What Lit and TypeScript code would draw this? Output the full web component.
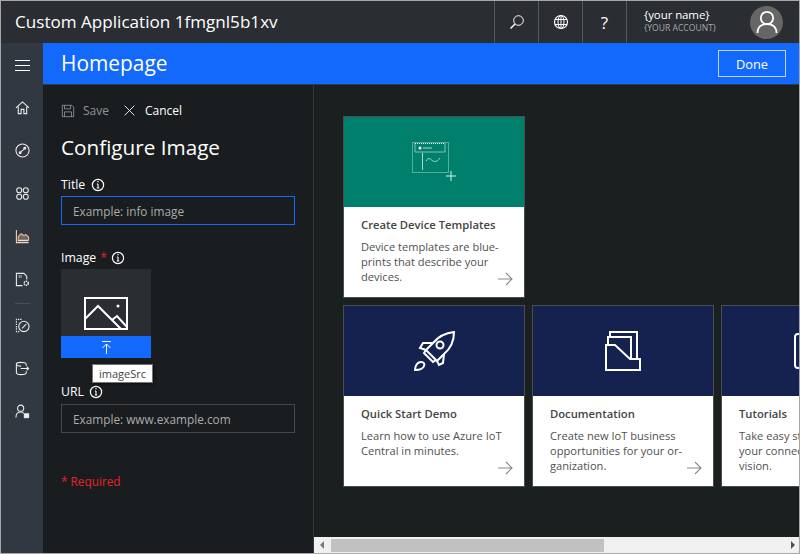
import { LitElement, html, css, svg } from 'lit';
import { customElement } from 'lit/decorators.js';

const icon = (body: unknown, size = 16, box = 16, sw = 1) => html`<svg width=${size} height=${size} viewBox="0 0 ${box} ${box}" fill="none" stroke="currentColor" stroke-width=${sw}>${body}</svg>`;

const info = html`<svg class="info" width="14" height="14" viewBox="0 0 14 14" fill="none" stroke="currentColor"><circle cx="7" cy="7" r="5.6" stroke-width="1.2"/><path d="M7 6v4M5.8 10h2.4M5.9 6H7" stroke-width="1.1"/><path d="M6.4 3.6h1.2" stroke-width="1.2"/></svg>`;

const arrow = html`<svg class="arrow" width="16" height="14" viewBox="0 0 16 14" fill="none" stroke="#8a8a8a" stroke-width="1.1"><path d="M1 7h14M9 1l6 6-6 6"/></svg>`;

const navIcons = [
  svg`<path d="M1 8.500 8 2l7 6.500M3.500 7v7.500h3V10h3v4.500h3V7"/>`,
  svg`<circle cx="8" cy="8" r="7"/><path d="M11 4.500c-2 .5-1 3-3 3.500s-1.500 2-3 3.500"/><circle cx="5.500" cy="10.500" r="1"/><circle cx="10.500" cy="5.500" r="1"/>`,
  svg`<circle cx="4.500" cy="4.500" r="2.700"/><circle cx="11.500" cy="4.500" r="2.700"/><circle cx="4.500" cy="11.500" r="2.700"/><circle cx="11.500" cy="11.500" r="2.700"/>`,
  svg`<path d="M1.500 1v13.500h13" stroke="#f3d3b5"/><path d="M3.500 12V8l3-3 3 2 2-1 3 2.500V12z" stroke="#f3b98b" fill="#6b6a6a"/><path d="M3 12.500h11"/>`,
  svg`<path d="M8 14.500H1.500v-13h8l3 3V8"/><path d="M4 4h4M4 5.500h4" stroke-dasharray="1 1"/><circle cx="12" cy="12" r="2.200" stroke-width="1.600" stroke-dasharray="1.500 .7"/>`,
];
const navIcons2 = [
  svg`<path d="M7 1.500H1.500v13H5" stroke-dasharray="1.500 1"/><circle cx="9.500" cy="9" r="5.500"/><path d="M7.500 11 12 6.500"/>`,
  svg`<path d="M12 5V3.500C12 2 9 1.500 6.500 1.500S1.500 2 1.500 3.500v9c0 1.500 2.500 2 5 2s5.500-.5 5.500-2V11M1.500 3.500c0 1.500 2.500 2 5 2"/><path d="M6 8h8.500M12.500 6l2 2-2 2"/>`,
  svg`<circle cx="6" cy="4.500" r="3.300"/><path d="M1 14.500c0-3.500 2-6 5-6 1.500 0 2.500.5 3.500 1.500"/><rect x="10" y="10.500" width="4.500" height="4" fill="currentColor"/>`,
];

const cards = [
  { title: 'Quick Start Demo', lines: ['Learn how to use Azure IoT', 'Central in minutes.'], art: 'rocket' },
  { title: 'Documentation', lines: ['Create new IoT business', 'opportunities for your or-', 'ganization.'], art: 'docs' },
  { title: 'Tutorials', lines: ['Take easy steps to get', 'your connected devices', 'vision.'], art: 'tablet' },
];

const arts: Record<string, unknown> = {
  rocket: html`<svg width="41" height="40" viewBox="0 0 41 40" fill="none" stroke="#fff" stroke-width="2"><path d="M40 1C30 2 24 6 19 12l-7 7 11 11 7-7c6-5 10-13 10-22z"/><circle cx="26" cy="14" r="3.500"/><path d="M19 12H9l-3 5 6 2M30 23l-1 9-4 2-2-4M12 19l-2 3 9 9 3-2"/><path d="M1 39c0-5 3-8 6-8s4 2 3 4c-1 3-5 4-9 4z"/></svg>`,
  docs: html`<svg width="36" height="40" viewBox="0 0 36 40" fill="none" stroke="#fff" stroke-width="2"><path d="M5 6V1h27v27"/><path d="M3 14V6h23v22"/><path d="M1 14h9l15 14h10v11H1z"/></svg>`,
  tablet: html`<svg width="36" height="36" viewBox="0 0 36 36" fill="none" stroke="#fff" stroke-width="2"><rect x="1" y="1" width="34" height="34" rx="3"/></svg>`,
};

@customElement('app-root')
export class AppRoot extends LitElement {
  static styles = css`
    :host {
      display: block;
      width: 800px;
      height: 554px;
      font-family: "Open Sans", "Noto Sans", sans-serif;
      color: #fff;
      overflow: hidden;
      box-sizing: border-box;
      border: 1px solid #a6a6a6;
      background: #1a1d1f;
    }
    .app { display: flex; flex-direction: column; height: 552px; }
    .head {
      height: 42px;
      flex: none;
      display: flex;
      background: #2a2d31;
    }
    .brand {
      flex: 1;
      padding-left: 14px;
      font-size: 17.1px;
      line-height: 42px;
      white-space: nowrap;
    }
    .tool {
      width: 44px;
      box-sizing: border-box;
      border-left: 1px solid #55585b;
      display: flex;
      align-items: center;
      justify-content: center;
      font-size: 17px;
    }
    .user {
      width: 173px;
      border-left: 1px solid #55585b;
      display: flex;
      align-items: center;
      justify-content: space-between;
      padding: 0 16px 0 17px;
      box-sizing: border-box;
    }
    .who { padding-bottom: 3px; }
    .user .name { font-size: 11.5px; line-height: 15px; letter-spacing: -.1px; }
    .user .acct { font-size: 8.6px; line-height: 11px; color: #a5aaad; margin-top: 1px; }
    .avatar {
      width: 33px;
      height: 33px;
      border-radius: 50%;
      background: #666;
      display: flex;
      align-items: center;
      justify-content: center;
    }
    .body { flex: 1; display: flex; min-height: 0; }
    .nav {
      width: 42px;
      flex: none;
      background: #323841;
      display: flex;
      flex-direction: column;
      align-items: center;
      padding-top: 17px;
      box-sizing: border-box;
      color: #ececec;
    }
    .nav .item { height: 43px; display: flex; align-items: flex-start; justify-content: center; flex: none; }
    .nav .item.burger { height: 40px; }
    .nav hr { width: 15px; border: 0; border-top: 1px solid #4a4f57; margin: -12px 0 14px; }
    .content { flex: 1; display: flex; flex-direction: column; min-width: 0; }
    .bar {
      height: 42px;
      flex: none;
      background: #1269fb;
      display: flex;
      align-items: center;
      justify-content: space-between;
      padding: 0 13px 0 18px;
      border-bottom: 1px solid #2f3b52;
      box-sizing: border-box;
      font-size: 20.9px;
    }
    .bar .page { margin-top: -2px; }
    .done {
      width: 68px;
      height: 27px;
      border: 1px solid #c2d4f0;
      box-sizing: border-box;
      font-size: 12.8px;
      display: flex;
      align-items: center;
      justify-content: center;
    }
    .split { flex: 1; display: flex; min-height: 0; }
    .panel {
      width: 270px;
      flex: none;
      padding: 16px 18px 0 18px;
      box-sizing: border-box;
      position: relative;
    }
    .actions { display: flex; align-items: center; font-size: 12px; height: 19px; }
    .actions .save { color: #8f9193; margin: 0 14px 0 8px; }
    .actions .cancel { margin-left: 9px; }
    .actions .x { color: #e6e6e6; display: flex; }
    .actions .disk { color: #8f9193; display: flex; }
    h1 { font-size: 20.7px; font-weight: 400; margin: 12px 0 0; line-height: 30px; }
    .label {
      display: flex;
      align-items: center;
      font-size: 12.3px;
      line-height: 16px;
      gap: 6px;
    }
    .label.first { margin-top: 15px; }
    .label.image { margin-top: 25px; gap: 5px; }
    .label.url { margin-top: 26px; gap: 5px; }
    .req { color: #e8202a; margin: 0 -1px; }
    .input {
      width: 234px;
      height: 29px;
      box-sizing: border-box;
      border: 1px solid #46484a;
      margin-top: 3px;
      padding-left: 11px;
      display: flex;
      align-items: center;
      font-size: 11.8px;
      color: #a9abad;
    }
    .input.focus { border-color: #1269fb; }
    .input.link { margin-top: 4px; }
    .pick { width: 90px; margin-top: 3px; }
    .thumb {
      height: 67px;
      background: #2a2d31;
      display: flex;
      align-items: flex-end;
      justify-content: center;
      padding-bottom: 5px;
      box-sizing: border-box;
    }
    .upload {
      height: 22px;
      background: #1269fb;
      display: flex;
      align-items: center;
      justify-content: center;
    }
    .tip {
      position: absolute;
      left: 49px;
      top: 279px;
      width: 61px;
      height: 19px;
      box-sizing: border-box;
      background: #fff;
      color: #444;
      border: 1px solid #767676;
      font-size: 11px;
      line-height: 17px;
      text-align: center;
      box-shadow: 1px 1px 3px rgba(0, 0, 0, .6);
      z-index: 2;
    }
    .required { color: #e8202a; font-size: 11.8px; margin-top: 40px; line-height: 16px; }
    .main {
      flex: 1;
      min-width: 0;
      border-left: 1px solid #33383c;
      display: flex;
      flex-direction: column;
      background: #1a1f20;
    }
    .scroller {
      flex: 1;
      min-height: 0;
      overflow: hidden;
      padding: 31px 0 0 29px;
      box-sizing: border-box;
    }
    .row { display: flex; gap: 7px; margin-bottom: 7px; }
    .card {
      width: 182px;
      height: 182px;
      flex: none;
      border: 1px solid #4a4d50;
      box-sizing: border-box;
      background: #fff;
      display: flex;
      flex-direction: column;
      position: relative;
      color: #444;
    }
    .art {
      height: 90px;
      flex: none;
      display: flex;
      align-items: center;
      justify-content: center;
      background: #15224f;
    }
    .art.green { background: #00806c; }
    .text { padding: 10px 17px 0; }
    .title { font-size: 11.25px; font-weight: 600; line-height: 16px; color: #444; white-space: nowrap; }
    .desc { font-size: 11.1px; line-height: 15px; margin-top: 6px; color: #505050; white-space: nowrap; }
    .arrow { position: absolute; right: 11px; bottom: 11px; }
    .track {
      height: 16px;
      flex: none;
      background: #f0f0f0;
      display: flex;
      align-items: center;
      padding: 0 4px 0 6px;
      box-sizing: border-box;
    }
    .thumbbar { width: 273px; height: 13px; background: #c1c1c1; margin-left: 7px; }
    .tri { width: 0; height: 0; border-top: 4px solid transparent; border-bottom: 4px solid transparent; }
    .tri.l { border-right: 4px solid #7a7a7a; }
    .tri.r { border-left: 4px solid #505050; margin-left: auto; }
  `;

  render() {
    return html`
      <div class="app">
        <div class="head">
          <div class="brand">Custom Application 1fmgnl5b1xv</div>
          <div class="tool">${icon(svg`<circle cx="9.500" cy="6.500" r="4.800"/><path d="M6 10 1.500 14.500" stroke-width="1.400"/>`)}</div>
          <div class="tool">${icon(svg`<circle cx="8" cy="8" r="6.500" stroke-width="1.200"/><ellipse cx="8" cy="8" rx="3" ry="6.500"/><path d="M2 5.500h12M2 10.500h12M8 1.500v13"/>`)}</div>
          <div class="tool">?</div>
          <div class="user">
            <div class="who">
              <div class="name">{your name}</div>
              <div class="acct">{YOUR ACCOUNT}</div>
            </div>
            <div class="avatar">
              <svg width="22" height="24" viewBox="0 0 22 24" fill="none" stroke="#fff" stroke-width="1.800"><circle cx="11" cy="8" r="6.200"/><path d="M1.500 23c0-6 4-9 9.500-9s9.500 3 9.500 9"/></svg>
            </div>
          </div>
        </div>
        <div class="body">
          <div class="nav">
            <div class="item burger"><svg width="15" height="11" viewBox="0 0 15 11" stroke="#fff"><path d="M0 .5h15M0 5.500h15M0 10.500h15"/></svg></div>
            ${navIcons.map((b) => html`<div class="item">${icon(b, 15, 16, 1.15)}</div>`)}
            <hr />
            ${navIcons2.map((b) => html`<div class="item">${icon(b, 15, 16, 1.15)}</div>`)}
          </div>
          <div class="content">
            <div class="bar"><span class="page">Homepage</span><div class="done">Done</div></div>
            <div class="split">
              <div class="panel">
                <div class="actions">
                  <span class="disk">${icon(svg`<path d="M1.500 1.500h11l2 2v11h-13z"/><path d="M4 1.500v4h7v-4M4 14.500V9h8v5.500"/>`, 14)}</span>
                  <span class="save">Save</span>
                  <span class="x">${icon(svg`<path d="M2 2l12 12M14 2 2 14" stroke-width="1.200"/>`, 13)}</span>
                  <span class="cancel">Cancel</span>
                </div>
                <h1>Configure Image</h1>
                <div class="label first">Title ${info}</div>
                <div class="input focus">Example: info image</div>
                <div class="label image">Image <span class="req">*</span> ${info}</div>
                <div class="pick">
                  <div class="thumb">
                    <svg width="44" height="34" viewBox="0 0 44 34" fill="none" stroke="#fff" stroke-width="2"><rect x="1" y="1" width="42" height="31"/><path d="M1 22 14 9l23 23"/><path d="M28 23l5-4 10 11"/><circle cx="34" cy="9" r="1.500" fill="#fff" stroke="none"/></svg>
                  </div>
                  <div class="upload">
                    <svg width="11" height="13" viewBox="0 0 11 13" fill="none" stroke="#fff" stroke-width="1"><path d="M1 .5h9M5.500 13V3M1.500 7l4-4 4 4"/></svg>
                  </div>
                </div>
                <div class="tip">imageSrc</div>
                <div class="label url">URL ${info}</div>
                <div class="input link">Example: www.example.com</div>
                <div class="required">* Required</div>
              </div>
              <div class="main">
                <div class="scroller">
                  <div class="row">
                    <div class="card">
                      <div class="art green">
                        <svg width="44" height="40" viewBox="0 0 44 40" fill="none" stroke="#a8dbd0" stroke-width="1"><path d="M.5.5h36v30H.5z" stroke-dasharray="1 1"/><path d="M3 1.500h30V10H3z" stroke="#fff" stroke-dasharray="1 1"/><circle cx="8" cy="6" r="1.500" fill="#fff" stroke="none"/><path d="M11 6h9M10.500 11v17M14 19c3-5 5-1 7 0s4 1 7-3"/><path d="M34 34h10M39 29v10" stroke="#d6efe9"/></svg>
                      </div>
                      <div class="text">
                        <div class="title">Create Device Templates</div>
                        <div class="desc">Device templates are blue-<br />prints that describe your<br />devices.</div>
                      </div>
                      ${arrow}
                    </div>
                  </div>
                  <div class="row">
                    ${cards.map((c) => html`
                      <div class="card">
                        <div class="art">${arts[c.art]}</div>
                        <div class="text">
                          <div class="title">${c.title}</div>
                          <div class="desc">${c.lines.map((l) => html`${l}<br />`)}</div>
                        </div>
                        ${arrow}
                      </div>
                    `)}
                  </div>
                </div>
                <div class="track">
                  <span class="tri l"></span>
                  <span class="thumbbar"></span>
                  <span class="tri r"></span>
                </div>
              </div>
            </div>
          </div>
        </div>
      </div>
    `;
  }
}
